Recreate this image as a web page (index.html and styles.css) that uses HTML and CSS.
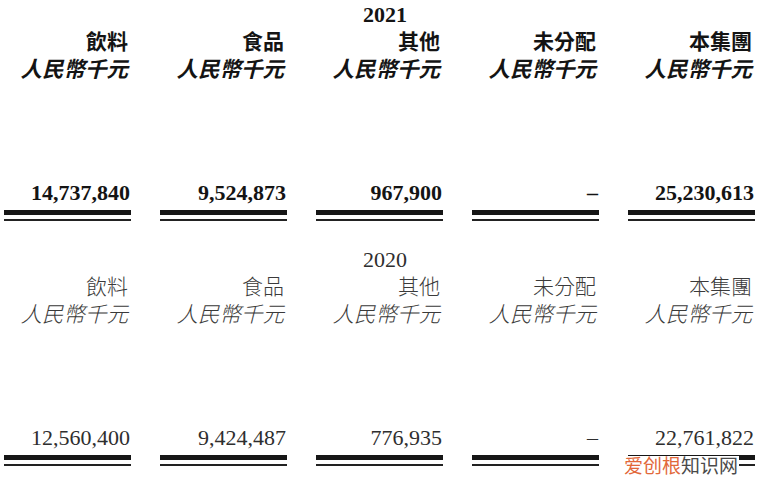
FILE: index.html
```html
<!DOCTYPE html>
<html lang="zh-Hant">
<head>
<meta charset="utf-8">
<title>分部資料</title>
<link rel="stylesheet" href="styles.css">
</head>
<body>
<div class="statement">
  <section class="block block--current">
    <div class="year">2021</div>
    <div class="grid">
      <div class="col"><div class="seg">飲料</div><div class="unit">人民幣千元</div><div class="amount">14,737,840</div><div class="rule"></div></div>
      <div class="col"><div class="seg">食品</div><div class="unit">人民幣千元</div><div class="amount">9,524,873</div><div class="rule"></div></div>
      <div class="col"><div class="seg">其他</div><div class="unit">人民幣千元</div><div class="amount">967,900</div><div class="rule"></div></div>
      <div class="col"><div class="seg">未分配</div><div class="unit">人民幣千元</div><div class="amount">–</div><div class="rule"></div></div>
      <div class="col"><div class="seg">本集團</div><div class="unit">人民幣千元</div><div class="amount">25,230,613</div><div class="rule"></div></div>
    </div>
  </section>
  <section class="block block--prior">
    <div class="year">2020</div>
    <div class="grid">
      <div class="col"><div class="seg">飲料</div><div class="unit">人民幣千元</div><div class="amount">12,560,400</div><div class="rule"></div></div>
      <div class="col"><div class="seg">食品</div><div class="unit">人民幣千元</div><div class="amount">9,424,487</div><div class="rule"></div></div>
      <div class="col"><div class="seg">其他</div><div class="unit">人民幣千元</div><div class="amount">776,935</div><div class="rule"></div></div>
      <div class="col"><div class="seg">未分配</div><div class="unit">人民幣千元</div><div class="amount">–</div><div class="rule"></div></div>
      <div class="col"><div class="seg">本集團</div><div class="unit">人民幣千元</div><div class="amount">22,761,822</div><div class="rule"></div></div>
    </div>
  </section>
  <div class="watermark"><span class="wm-hot">爱创根</span><span class="wm-cool">知识网</span></div>
</div>
</body>
</html>
```
FILE: styles.css
```css
html, body {
  margin: 0;
  padding: 0;
  background: #ffffff;
}
.statement {
  position: relative;
  width: 765px;
  height: 484px;
  overflow: hidden;
}
.block {
  padding-top: 4px;
  margin-bottom: 24px;
  color: #141414;
}
.year {
  box-sizing: border-box;
  font-family: "Liberation Serif", "Times New Roman", serif;
  font-size: 22px;
  line-height: 22px;
  text-align: center;
  padding-left: 15px;
  width: 755px;
}
.grid {
  display: grid;
  grid-template-columns: repeat(5, 127px);
  column-gap: 29px;
  padding-left: 4px;
}
.col {
  display: flex;
  flex-direction: column;
  text-align: right;
}
.seg, .unit {
  font-family: "Noto Sans CJK TC", "Noto Sans CJK SC", sans-serif;
  font-size: 21px;
  line-height: 28px;
  padding-right: 3px;
}
.unit {
  font-style: italic;
  font-size: 21.5px;
  padding-right: 3px;
}
.amount {
  font-family: "Liberation Serif", "Times New Roman", serif;
  font-size: 22px;
  line-height: 22px;
  margin-top: 100px;
  padding-right: 1px;
}
.rule {
  margin-top: 6px;
  height: 4px;
  border-top: 5px solid #161616;
  border-bottom: 2px solid #222222;
}
.block--current .year,
.block--current .amount,
.block--current .seg,
.block--current .unit {
  font-weight: 700;
}
.block--prior {
  color: #2e2e2e;
}
.block--prior .seg,
.block--prior .unit {
  font-weight: 300;
  color: #3a3a3a;
}
.watermark {
  position: absolute;
  left: 623px;
  top: 456px;
  font-family: "Noto Sans CJK SC", sans-serif;
  font-size: 19px;
  line-height: 18px;
  background: #ffffff;
  padding: 0 1px;
}
.wm-hot {
  color: #e2683a;
}
.wm-cool {
  color: #4a4a4a;
}
```
